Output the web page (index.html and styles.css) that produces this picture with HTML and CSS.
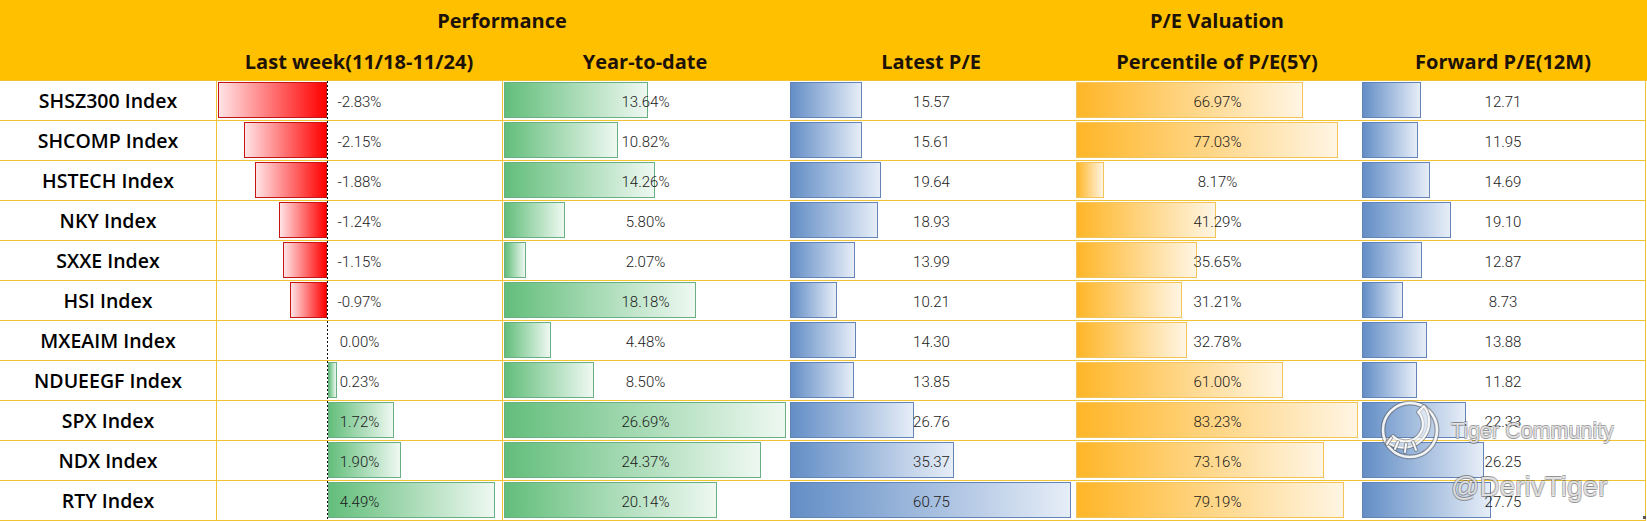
FILE: index.html
```html
<!DOCTYPE html>
<html>
<head>
<meta charset="utf-8">
<link rel="stylesheet" href="styles.css">
</head>
<body>
<div class="sheet">
  <div class="head">
    <div class="h-group perf">Performance</div>
    <div class="h-group valu">P/E Valuation</div>
    <div class="h-sub c2">Last week(11/18-11/24)</div>
    <div class="h-sub c3">Year-to-date</div>
    <div class="h-sub c4">Latest P/E</div>
    <div class="h-sub c5">Percentile of P/E(5Y)</div>
    <div class="h-sub c6">Forward P/E(12M)</div>
  </div>

  <div class="row">
    <div class="name">SHSZ300 Index</div>
    <div class="cell bl"><div class="track"><div class="neg"><span class="bar r" style="width:109px"></span></div><div class="axis"></div><div class="pos"></div></div><span class="val">-2.83%</span></div>
    <div class="cell bl"><span class="bar g" style="width:144px"></span><span class="val">13.64%</span></div>
    <div class="cell"><span class="bar b" style="width:72px"></span><span class="val">15.57</span></div>
    <div class="cell"><span class="bar o" style="width:227px"></span><span class="val">66.97%</span></div>
    <div class="cell last"><span class="bar b" style="width:59px"></span><span class="val">12.71</span></div>
  </div>

  <div class="row">
    <div class="name">SHCOMP Index</div>
    <div class="cell bl"><div class="track"><div class="neg"><span class="bar r" style="width:83px"></span></div><div class="axis"></div><div class="pos"></div></div><span class="val">-2.15%</span></div>
    <div class="cell bl"><span class="bar g" style="width:114px"></span><span class="val">10.82%</span></div>
    <div class="cell"><span class="bar b" style="width:72px"></span><span class="val">15.61</span></div>
    <div class="cell"><span class="bar o" style="width:262px"></span><span class="val">77.03%</span></div>
    <div class="cell last"><span class="bar b" style="width:56px"></span><span class="val">11.95</span></div>
  </div>

  <div class="row">
    <div class="name">HSTECH Index</div>
    <div class="cell bl"><div class="track"><div class="neg"><span class="bar r" style="width:72px"></span></div><div class="axis"></div><div class="pos"></div></div><span class="val">-1.88%</span></div>
    <div class="cell bl"><span class="bar g" style="width:151px"></span><span class="val">14.26%</span></div>
    <div class="cell"><span class="bar b" style="width:91px"></span><span class="val">19.64</span></div>
    <div class="cell"><span class="bar o" style="width:28px"></span><span class="val">8.17%</span></div>
    <div class="cell last"><span class="bar b" style="width:68px"></span><span class="val">14.69</span></div>
  </div>

  <div class="row">
    <div class="name">NKY Index</div>
    <div class="cell bl"><div class="track"><div class="neg"><span class="bar r" style="width:48px"></span></div><div class="axis"></div><div class="pos"></div></div><span class="val">-1.24%</span></div>
    <div class="cell bl"><span class="bar g" style="width:61px"></span><span class="val">5.80%</span></div>
    <div class="cell"><span class="bar b" style="width:88px"></span><span class="val">18.93</span></div>
    <div class="cell"><span class="bar o" style="width:140px"></span><span class="val">41.29%</span></div>
    <div class="cell last"><span class="bar b" style="width:89px"></span><span class="val">19.10</span></div>
  </div>

  <div class="row">
    <div class="name">SXXE Index</div>
    <div class="cell bl"><div class="track"><div class="neg"><span class="bar r" style="width:44px"></span></div><div class="axis"></div><div class="pos"></div></div><span class="val">-1.15%</span></div>
    <div class="cell bl"><span class="bar g" style="width:22px"></span><span class="val">2.07%</span></div>
    <div class="cell"><span class="bar b" style="width:65px"></span><span class="val">13.99</span></div>
    <div class="cell"><span class="bar o" style="width:121px"></span><span class="val">35.65%</span></div>
    <div class="cell last"><span class="bar b" style="width:60px"></span><span class="val">12.87</span></div>
  </div>

  <div class="row">
    <div class="name">HSI Index</div>
    <div class="cell bl"><div class="track"><div class="neg"><span class="bar r" style="width:37px"></span></div><div class="axis"></div><div class="pos"></div></div><span class="val">-0.97%</span></div>
    <div class="cell bl"><span class="bar g" style="width:192px"></span><span class="val">18.18%</span></div>
    <div class="cell"><span class="bar b" style="width:47px"></span><span class="val">10.21</span></div>
    <div class="cell"><span class="bar o" style="width:106px"></span><span class="val">31.21%</span></div>
    <div class="cell last"><span class="bar b" style="width:41px"></span><span class="val">8.73</span></div>
  </div>

  <div class="row">
    <div class="name">MXEAIM Index</div>
    <div class="cell bl"><div class="track"><div class="neg"></div><div class="axis"></div><div class="pos"></div></div><span class="val">0.00%</span></div>
    <div class="cell bl"><span class="bar g" style="width:47px"></span><span class="val">4.48%</span></div>
    <div class="cell"><span class="bar b" style="width:66px"></span><span class="val">14.30</span></div>
    <div class="cell"><span class="bar o" style="width:111px"></span><span class="val">32.78%</span></div>
    <div class="cell last"><span class="bar b" style="width:65px"></span><span class="val">13.88</span></div>
  </div>

  <div class="row">
    <div class="name">NDUEEGF Index</div>
    <div class="cell bl"><div class="track"><div class="neg"></div><div class="axis"></div><div class="pos"><span class="bar g" style="width:9px"></span></div></div><span class="val">0.23%</span></div>
    <div class="cell bl"><span class="bar g" style="width:90px"></span><span class="val">8.50%</span></div>
    <div class="cell"><span class="bar b" style="width:64px"></span><span class="val">13.85</span></div>
    <div class="cell"><span class="bar o" style="width:207px"></span><span class="val">61.00%</span></div>
    <div class="cell last"><span class="bar b" style="width:55px"></span><span class="val">11.82</span></div>
  </div>

  <div class="row">
    <div class="name">SPX Index</div>
    <div class="cell bl"><div class="track"><div class="neg"></div><div class="axis"></div><div class="pos"><span class="bar g" style="width:66px"></span></div></div><span class="val">1.72%</span></div>
    <div class="cell bl"><span class="bar g" style="width:282px"></span><span class="val">26.69%</span></div>
    <div class="cell"><span class="bar b" style="width:124px"></span><span class="val">26.76</span></div>
    <div class="cell"><span class="bar o" style="width:282px"></span><span class="val">83.23%</span></div>
    <div class="cell last"><span class="bar b" style="width:104px"></span><span class="val">22.33</span></div>
  </div>

  <div class="row">
    <div class="name">NDX Index</div>
    <div class="cell bl"><div class="track"><div class="neg"></div><div class="axis"></div><div class="pos"><span class="bar g" style="width:73px"></span></div></div><span class="val">1.90%</span></div>
    <div class="cell bl"><span class="bar g" style="width:257px"></span><span class="val">24.37%</span></div>
    <div class="cell"><span class="bar b" style="width:164px"></span><span class="val">35.37</span></div>
    <div class="cell"><span class="bar o" style="width:248px"></span><span class="val">73.16%</span></div>
    <div class="cell last"><span class="bar b" style="width:122px"></span><span class="val">26.25</span></div>
  </div>

  <div class="row">
    <div class="name">RTY Index</div>
    <div class="cell bl"><div class="track"><div class="neg"></div><div class="axis"></div><div class="pos"><span class="bar g" style="width:167px"></span></div></div><span class="val">4.49%</span></div>
    <div class="cell bl"><span class="bar g" style="width:213px"></span><span class="val">20.14%</span></div>
    <div class="cell"><span class="bar b" style="width:281px"></span><span class="val">60.75</span></div>
    <div class="cell"><span class="bar o" style="width:268px"></span><span class="val">79.19%</span></div>
    <div class="cell last"><span class="bar b" style="width:129px"></span><span class="val">27.75</span></div>
  </div>
</div>

<div class="wm-logo">
  <svg width="64" height="64" viewBox="0 0 64 64">
    <g fill="none" stroke-linecap="round" stroke-linejoin="round">
      <circle cx="32" cy="32" r="27" stroke="rgba(90,90,90,0.5)" stroke-width="5"/>
      <circle cx="32" cy="32" r="27" stroke="rgba(255,255,255,0.9)" stroke-width="2.6"/>
      <path d="M9 44 A26 26 0 0 0 46 8 L40 14 A17 17 0 0 1 15 38 Z" stroke="rgba(90,90,90,0.5)" stroke-width="4"/>
      <path d="M9 44 A26 26 0 0 0 46 8 L40 14 A17 17 0 0 1 15 38 Z" fill="rgba(255,255,255,0.55)" stroke="rgba(255,255,255,0.9)" stroke-width="2"/>
      <path d="M13 40 L9 46 M20 44 L17 51 M28 46 L27 54 M35 44 L38 52" stroke="rgba(90,90,90,0.5)" stroke-width="4"/>
      <path d="M13 40 L9 46 M20 44 L17 51 M28 46 L27 54 M35 44 L38 52" stroke="rgba(255,255,255,0.95)" stroke-width="2"/>
    </g>
  </svg>
</div>
<div class="wm-t1">Tiger Community</div>
<div class="wm-t2">@DerivTiger</div>
<div class="corner"></div>
</body>
</html>
```

FILE: styles.css
```css
* {
  box-sizing: border-box;
  margin: 0;
  padding: 0;
}

html, body {
  margin: 0;
  background: #ffffff;
}

body {
  position: relative;
  width: 1647px;
  height: 521px;
  overflow: hidden;
  font-family: "Open Sans", "Noto Sans CJK SC", sans-serif;
}

.sheet {
  width: 1646px;
}

.head {
  display: grid;
  grid-template-columns: 216px repeat(5, 286px);
  grid-template-rows: 40px 40px;
  width: 1647px;
  height: 81px;
  background: #FFC000;
  border-bottom: 1px solid #EFC332;
  color: #1c1207;
  font-size: 20px;
  font-weight: 700;
}

.h-group {
  grid-row: 1;
  text-align: center;
  padding-top: 2px;
  line-height: 38px;
}

.perf { grid-column: 2 / 4; }
.valu { grid-column: 4 / 7; }

.h-sub {
  grid-row: 2;
  text-align: center;
  padding-top: 3px;
  line-height: 37px;
  white-space: nowrap;
}

.c2 { grid-column: 2; }
.c3 { grid-column: 3; }
.c4 { grid-column: 4; }
.c5 { grid-column: 5; }
.c6 { grid-column: 6; }

.row {
  display: grid;
  grid-template-columns: 216px repeat(5, 286px);
  height: 40px;
  border-bottom: 1px solid #EFC332;
}

.name {
  text-align: center;
  font-size: 19.5px;
  font-weight: 600;
  line-height: 39px;
  color: #000;
  white-space: nowrap;
}

.cell {
  display: grid;
  grid-template-rows: 39px;
  grid-template-columns: 100%;
  border-left: 1px solid transparent;
  min-width: 0;
}

.cell.bl { border-left-color: #EFC332; }
.cell.last { border-right: 1px solid #EFC332; }

.cell > * {
  grid-area: 1 / 1;
}

.bar {
  display: block;
  align-self: start;
  justify-self: start;
  height: 36px;
  margin-top: 1px;
  margin-left: 1px;
  border: 1px solid;
}

.track {
  display: flex;
  height: 39px;
}

.neg {
  width: 110px;
  display: flex;
  justify-content: flex-end;
  align-items: flex-start;
}

.axis {
  width: 1px;
  height: 39px;
  background: repeating-linear-gradient(to bottom, #111 0 2px, transparent 2px 4px);
}

.pos {
  flex: 1;
  display: flex;
  align-items: flex-start;
}

.neg .bar, .pos .bar {
  margin-left: 0;
}

.val {
  justify-self: center;
  align-self: start;
  font-family: Roboto, "Liberation Sans", sans-serif;
  font-weight: 300;
  font-size: 15px;
  padding-top: 3px;
  line-height: 36px;
  color: #1a1a1a;
  white-space: nowrap;
}

.g {
  background: linear-gradient(to right, #63BE7B, #EEF8F1);
  border-color: #6AAE83;
}

.b {
  background: linear-gradient(to right, #638EC6, #E6EDF7);
  border-color: #6384B5;
}

.o {
  background: linear-gradient(to right, #FFB628, #FFF5E3);
  border-color: #F3C45A;
}

.r {
  background: linear-gradient(to left, #FF0000, #FFE3E5);
  border-color: #C41414;
}

.wm-logo {
  position: absolute;
  left: 1378px;
  top: 398px;
  width: 64px;
  height: 64px;
}

.wm-t1,
.wm-t2 {
  position: absolute;
  left: 1451px;
  font-family: "Liberation Sans", sans-serif;
  color: rgba(255, 255, 255, 0.75);
  text-shadow: 0.7px 0.7px 0 rgba(90, 90, 90, 0.42), -0.7px -0.7px 0 rgba(90, 90, 90, 0.42), 0.7px -0.7px 0 rgba(90, 90, 90, 0.42), -0.7px 0.7px 0 rgba(90, 90, 90, 0.42);
  white-space: nowrap;
}

.wm-t1 {
  top: 420px;
  font-size: 21.5px;
  line-height: 22px;
}

.wm-t2 {
  top: 473px;
  font-size: 28px;
  line-height: 28px;
}

.corner {
  position: absolute;
  left: 1643px;
  top: 516px;
  width: 3px;
  height: 3px;
  background: #555;
}
```
